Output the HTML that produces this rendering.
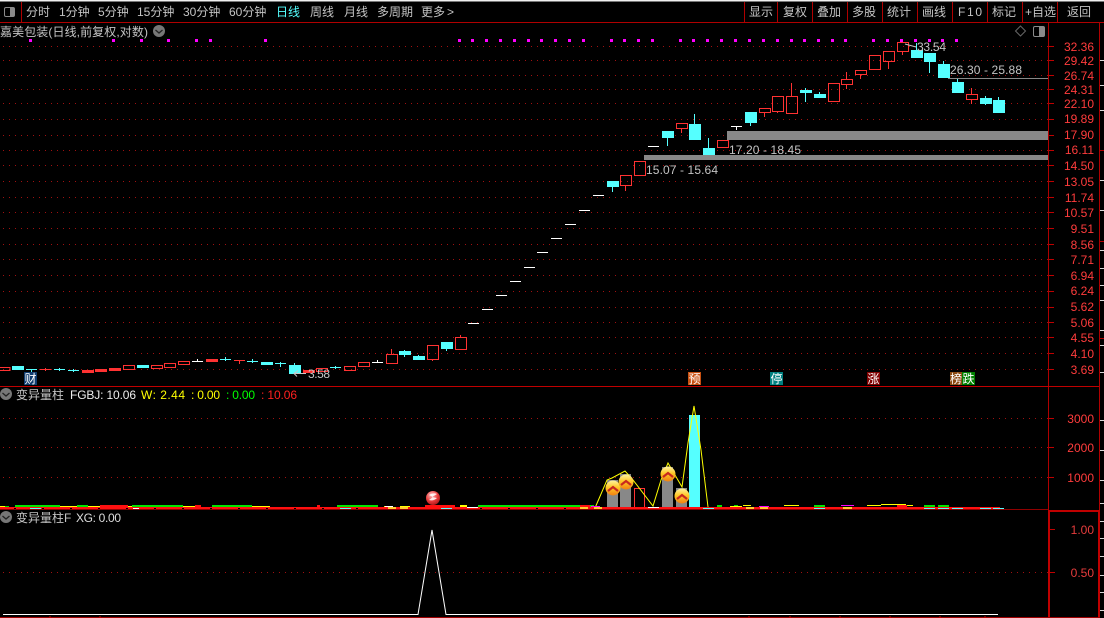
<!DOCTYPE html>
<html><head><meta charset="utf-8"><style>
html,body{margin:0;padding:0;background:#000;width:1104px;height:618px;overflow:hidden}
svg{display:block}
text{font-family:"Liberation Sans","WenQuanYi Zen Hei","Noto Sans CJK SC",sans-serif;font-size:12px;fill:#c4c4c4}
.t text{font-size:12px}
.p text{fill:#ff3c3c;text-anchor:end}
.s text{fill:#fff;text-anchor:middle;font-size:12px}
.c{shape-rendering:crispEdges}
</style></head><body>
<svg width="1104" height="618" viewBox="0 0 1104 618" xmlns="http://www.w3.org/2000/svg">
<defs>
<linearGradient id="g" x1="0" y1="0" x2="0" y2="1"><stop offset="0" stop-color="#fff3a0"/><stop offset=".45" stop-color="#ffc828"/><stop offset="1" stop-color="#f08010"/></linearGradient>
<radialGradient id="b" cx=".4" cy=".3" r=".8"><stop offset="0" stop-color="#ffc0c0"/><stop offset=".55" stop-color="#e83a3a"/><stop offset="1" stop-color="#a01010"/></radialGradient>
</defs>
<rect width="1104" height="618" fill="#000"/>
<rect width="1104" height="1.5" fill="#f0f0f0" class="c"/>
<g class="c" fill="#b00000">
<rect x="0" y="22" width="1104" height="1"/><rect x="21" y="2" width="1" height="20"/>
<rect x="744" y="2" width="1" height="20"/><rect x="777" y="2" width="1" height="20"/><rect x="812" y="2" width="1" height="20"/><rect x="847" y="2" width="1" height="20"/><rect x="882" y="2" width="1" height="20"/><rect x="917" y="2" width="1" height="20"/><rect x="952" y="2" width="1" height="20"/><rect x="987" y="2" width="1" height="20"/><rect x="1022" y="2" width="1" height="20"/><rect x="1057" y="2" width="1" height="20"/>
<rect x="1048" y="23" width="1" height="487"/><rect x="1099" y="23" width="1" height="595"/>
<rect x="0" y="386" width="1099" height="1" fill="#c00000"/><rect x="0" y="509" width="1048" height="1" fill="#900000"/>
<rect x="1099" y="241" width="5" height="1"/><rect x="1099" y="338" width="5" height="1"/><rect x="1099" y="150" width="5" height="1"/>
<rect x="1048" y="510" width="2" height="107" fill="#c00000"/><rect x="1048" y="510" width="52" height="2" fill="#c00000"/><rect x="1098" y="510" width="2" height="107" fill="#c00000"/>
<rect x="0" y="617" width="1100" height="1" fill="#a00000"/>
</g>
<rect x="4.5" y="7.5" width="10" height="9" rx="1.5" fill="none" stroke="#8a8a8a"/><rect x="10" y="8" width="4" height="8" fill="#8a8a8a"/>
<g class="t">
<text x="26" y="16">分时</text><text x="59" y="16">1分钟</text><text x="98" y="16">5分钟</text><text x="137" y="16">15分钟</text><text x="183" y="16">30分钟</text><text x="229" y="16">60分钟</text>
<text x="276" y="16" style="fill:#55ffff">日线</text><text x="310" y="16">周线</text><text x="344" y="16">月线</text><text x="377" y="16">多周期</text><text x="421" y="16">更多</text><text x="447" y="16">&gt;</text>
<text x="749" y="16">显示</text><text x="783" y="16">复权</text><text x="817" y="16">叠加</text><text x="852" y="16">多股</text><text x="887" y="16">统计</text><text x="922" y="16">画线</text><text x="958" y="16" textLength="24">F10</text><text x="992" y="16">标记</text><text x="1025" y="16">+自选</text><text x="1067" y="16">返回</text>
<text x="0" y="36" textLength="148">嘉美包装(日线,前复权,对数)</text>
</g>
<circle cx="159" cy="31" r="6" fill="#777"/><path d="M155.5 30l3.5 3 3.5-3" fill="none" stroke="#222" stroke-width="1.3"/>
<path d="M1020.5 26l5 5-5 5-5-5z" fill="none" stroke="#666"/>
<rect x="1033.5" y="26.5" width="11" height="10" rx="1.5" fill="none" stroke="#8a8a8a"/><rect x="1039" y="27" width="5" height="9" fill="#8a8a8a"/>
<path class="c" fill="#ff00ff" d="M29 39h3v3h-3zM112 39h3v3h-3zM140 39h3v3h-3zM167 39h3v3h-3zM195 39h3v3h-3zM209 39h3v3h-3zM264 39h3v3h-3zM458 39h3v3h-3zM471 39h3v3h-3zM485 39h3v3h-3zM499 39h3v3h-3zM513 39h3v3h-3zM527 39h3v3h-3zM540 39h3v3h-3zM554 39h3v3h-3zM568 39h3v3h-3zM582 39h3v3h-3zM610 39h3v3h-3zM623 39h3v3h-3zM637 39h3v3h-3zM651 39h3v3h-3zM679 39h3v3h-3zM692 39h3v3h-3zM706 39h3v3h-3zM720 39h3v3h-3zM734 39h3v3h-3zM748 39h3v3h-3zM762 39h3v3h-3zM776 39h3v3h-3zM790 39h3v3h-3zM803 39h3v3h-3zM817 39h3v3h-3zM831 39h3v3h-3zM844 39h3v3h-3zM872 39h3v3h-3zM886 39h3v3h-3zM900 39h3v3h-3zM914 39h3v3h-3zM928 39h3v3h-3zM941 39h3v3h-3zM955 39h3v3h-3z"/>
<path class="c" stroke="#a01010" stroke-dasharray="1 5" fill="none" d="M3 46.5H1048M3 60.5H1048M3 75.5H1048M3 89.5H1048M3 103.5H1048M3 119.5H1048M3 135.5H1048M3 150.5H1048M3 165.5H1048M3 181.5H1048M3 197.5H1048M3 212.5H1048M3 228.5H1048M3 244.5H1048M3 259.5H1048M3 275.5H1048M3 291.5H1048M3 307.5H1048M3 322.5H1048M3 337.5H1048M3 353.5H1048M3 369.5H1048M3 418.5H1048M3 447.5H1048M3 477.5H1048M3 572.5H1048"/>
<path class="c" stroke="#c00000" fill="none" d="M1049 46.5h5M1049 60.5h5M1049 75.5h5M1049 89.5h5M1049 103.5h5M1049 119.5h5M1049 135.5h5M1049 150.5h5M1049 165.5h5M1049 181.5h5M1049 197.5h5M1049 212.5h5M1049 228.5h5M1049 244.5h5M1049 259.5h5M1049 275.5h5M1049 291.5h5M1049 307.5h5M1049 322.5h5M1049 337.5h5M1049 353.5h5M1049 369.5h5M1049 418.5h5M1049 447.5h5M1049 477.5h5M1050 529.5h5M1050 572.5h5M50 616v2M100 616v2M749 616v2M790 616v2M840 616v2M890 616v2M940 616v2M985 616v2"/>
<path class="c" stroke="#d8d8d8" fill="none" d="M1100 60.5h4M1100 85.5h4M1100 110.5h4M1100 180.5h4M1100 210.5h4M1100 250.5h4M1100 268.5h4M1100 285.5h4M1100 300.5h4M1100 330.5h4M1100 345.5h4M1100 372.5h4M1100 420.5h4M1100 450.5h4M1100 480.5h4M1100 503.5h4M1100 521.5h4M1100 538.5h4M1100 556.5h4M1100 575.5h4M1100 592.5h4M1100 610.5h4"/>
<g class="p">
<text x="1094" y="51">32.36</text><text x="1094" y="65">29.42</text><text x="1094" y="80">26.74</text><text x="1094" y="94">24.31</text><text x="1094" y="108">22.10</text><text x="1094" y="123">19.89</text><text x="1094" y="139">17.90</text><text x="1094" y="154">16.11</text><text x="1094" y="170">14.50</text><text x="1094" y="186">13.05</text><text x="1094" y="202">11.74</text><text x="1094" y="217">10.57</text><text x="1094" y="233">9.51</text><text x="1094" y="249">8.56</text><text x="1094" y="264">7.71</text><text x="1094" y="280">6.94</text><text x="1094" y="295">6.24</text><text x="1094" y="311">5.62</text><text x="1094" y="327">5.06</text><text x="1094" y="342">4.55</text><text x="1094" y="358">4.10</text><text x="1094" y="374">3.69</text>
<text x="1094" y="423">3000</text><text x="1094" y="452">2000</text><text x="1094" y="482">1000</text>
<text x="1094" y="534" style="fill:#e63c3c">1.00</text><text x="1094" y="577" style="fill:#e63c3c">0.50</text>
</g>
<g class="c" fill="#888">
<rect x="727" y="131" width="321" height="9"/><rect x="644" y="155" width="404" height="5"/><rect x="948" y="78" width="100" height="1"/>
</g>
<path class="c" fill="none" stroke="#ff3232" d="M-1 367.5h11v3h-11zM123.5 365.5h11v4h-11zM151.5 365.5h11v3h-11zM164.5 363.5h11v4h-11zM178.5 361.5h11v3h-11zM316.5 368.5h11v3h-11zM344.5 366.5h11v4h-11zM358.5 362.5h11v4h-11zM386.5 354.5h11v9h-11zM391.5 349v5M427.5 345.5h11v14h-11zM432.5 360v1M455.5 337.5h11v12h-11zM460.5 335v2M620.5 175.5h11v10h-11zM625.5 186v5M634.5 161.5h11v14h-11zM676.5 123.5h11v5h-11zM681.5 129v4M717.5 140.5h11v7h-11zM759.5 108.5h11v4h-11zM764.5 113v4M772.5 96.5h11v15h-11zM777.5 112v1M786.5 96.5h11v17h-11zM791.5 83v13M828.5 83.5h11v18h-11zM841.5 79.5h11v5h-11zM846.5 72v7M846.5 85v4M855.5 70.5h11v4h-11zM860.5 75v4M869.5 55.5h11v14h-11zM883.5 51.5h11v10h-11zM888.5 62v7M897.5 42.5h11v9h-11zM902.5 52v3M966.5 94.5h11v5h-11zM971.5 88v6M971.5 100v4M40 369.5h11M45.5 368v3M234 360.5h11M239.5 361v3"/>
<path class="c" fill="#ff3232" d="M82 370h12v3h-12zM95 369h12v3h-12zM109 368h12v3h-12zM206 359h12v3h-12zM303 370h12v3h-12z"/>
<path class="c" fill="#55ffff" d="M12 366h12v4h-12zM137 365h12v3h-12zM261 362h12v3h-12zM289 365h12v9h-12zM399 351h12v4h-12zM413 356h12v4h-12zM441 342h12v7h-12zM607 181h12v6h-12zM662 131h12v7h-12zM689 124h12v16h-12zM703 148h12v7h-12zM745 112h12v11h-12zM800 90h12v3h-12zM814 94h12v4h-12zM911 50h12v8h-12zM924 53h12v9h-12zM938 64h12v14h-12zM952 82h12v11h-12zM980 98h12v6h-12zM993 100h12v13h-12z"/>
<path class="c" fill="none" stroke="#55ffff" d="M294.5 363v2M404.5 350v7M418.5 355v5M446.5 349v2M612.5 187v5M667.5 138v8M694.5 114v10M708.5 138v10M750.5 123v3M805.5 88v14M819.5 92v6M916.5 43v7M929.5 62v11M943.5 61v3M957.5 79v3M985.5 96v9M998.5 97v16M26 369.5h11M31.5 370v3M54 369.5h11M59.5 368v3M68 370.5h11M73.5 369v3M220 359.5h11M225.5 357v4M247 361.5h11M252.5 359v4M275 363.5h11M280.5 362v5M330 367.5h11M335.5 366v3"/>
<path class="c" fill="none" stroke="#fff" d="M192 361.5h11M197.5 359v2M372 362.5h11M377.5 360v2M468 323.5h11M482 309.5h11M496 295.5h11M510 281.5h11M524 267.5h11M537 252.5h11M551 238.5h11M565 224.5h11M579 210.5h11M593 195.5h11M648 146.5h11M731 126.5h11M736.5 127v3"/>
<text x="917" y="51" textLength="29">33.54</text>
<path d="M905 44l11 3" stroke="#c4c4c4" fill="none"/>
<text x="950" y="74" textLength="72">26.30 - 25.88</text>
<text x="729" y="154" textLength="72">17.20 - 18.45</text>
<text x="646" y="174" textLength="72">15.07 - 15.64</text>
<path class="c" d="M294 373.5h12" stroke="#c8c8c8" fill="none"/><path d="M298 370.5l-4 3 3 3" stroke="#c8c8c8" fill="none"/>
<text x="308" y="378" textLength="22">3.58</text>
<g class="c"><rect x="24" y="372" width="13" height="13" fill="#103d70"/><rect x="688" y="372" width="13" height="13" fill="#c85010"/><rect x="770" y="372" width="13" height="13" fill="#008080"/><rect x="867" y="372" width="13" height="13" fill="#800000"/><rect x="950" y="372" width="13" height="13" fill="#8b4a10"/><rect x="962" y="372" width="13" height="13" fill="#008000"/></g>
<g class="s"><text x="30.5" y="383">财</text><text x="694.5" y="383">预</text><text x="776.5" y="383">停</text><text x="873.5" y="383">涨</text><text x="956" y="383">榜</text><text x="968.5" y="383">跌</text></g>
<circle cx="6" cy="394" r="6" fill="#777"/><path d="M2.5 393l3.5 3 3.5-3" fill="none" stroke="#222" stroke-width="1.3"/>
<text x="16" y="399">变异量柱</text>
<text x="70" y="399" style="fill:#eee" textLength="66">FGBJ: 10.06</text>
<text x="141" y="399" style="fill:#ffff00" textLength="44">W: 2.44</text>
<text x="191" y="399" style="fill:#ffff00" textLength="29">: 0.00</text>
<text x="226" y="399" style="fill:#00ff00" textLength="29">: 0.00</text>
<text x="261" y="399" style="fill:#ff2020" textLength="36">: 10.06</text>
<g class="c">
<rect x="607" y="480" width="11" height="28" fill="#888"/><rect x="620" y="474" width="11" height="34" fill="#888"/><rect x="662" y="467" width="11" height="41" fill="#888"/><rect x="676" y="488" width="11" height="19" fill="#888"/><rect x="689" y="415" width="11" height="92" fill="#55ffff"/>
<rect x="634.5" y="488.5" width="10" height="19" fill="none" stroke="#ff3232"/>
</g>
<polyline fill="none" stroke="#ffff00" points="595,508 607,480 612,478 625,471 633,480 653,506 661,480 668,463 682,487 688,443 694,406 701,450 708,507"/>
<path class="c" fill="#00e600" d="M5 506h4v1h-4zM15 505h45v2h-45zM77 505h11v2h-11zM132 505h51v2h-51zM212 505h40v2h-40zM337 505h41v2h-41zM478 505h102v2h-102zM590 505h4v2h-4zM717 505h5v2h-5zM734 505h4v2h-4zM814 505h11v2h-11zM924 505h11v2h-11zM938 505h11v2h-11z"/>
<path class="c" fill="#ffff00" d="M0 506h5v1h-5zM60 506h17v1h-17zM88 506h12v1h-12zM128 506h4v1h-4zM183 506h12v1h-12zM252 506h18v1h-18zM384 506h8v1h-8zM400 506h10v1h-10zM460 505h7v2h-7zM784 505h15v1h-15zM867 505h14v1h-14zM881 504h25v1h-25zM906 505h7v1h-7zM730 506h12v1h-12zM743 505h8v1h-8z"/>
<path class="c" fill="#ff1010" d="M0 507h1000v2h-1000zM100 505h28v2h-28zM195 505h6v2h-6zM317 505h3v2h-3zM425 505h30v2h-30zM580 505h10v2h-10zM897 505h10v2h-10z"/>
<path class="c" fill="#ff00ff" d="M591 506h9v1h-9zM759 506h10v1h-10zM841 505h13v1h-13z"/>
<path class="c" fill="#55ffff" d="M30 508h11v1h-11zM340 508h11v1h-11zM441 508h11v1h-11zM703 508h11v1h-11zM814 508h11v1h-11zM924 508h11v1h-11zM938 508h11v1h-11zM952 508h11v1h-11zM980 508h11v1h-11zM993 508h11v1h-11z"/>
<path class="c" fill="#fff" d="M133 508h6v1h-6zM467 507h11v1h-11zM648 507h11v1h-11zM385 506h8v1h-8z"/>
<path class="c" fill="#ffcc30" d="M594 507h8v2h-8zM746 507h8v2h-8zM760 507h8v2h-8zM843 507h9v2h-9zM388 507h8v2h-8zM400 507h8v2h-8zM580 507h8v2h-8z"/>
<path class="c" fill="#000" d="M14 508h2v1h-2zM42 508h2v1h-2zM70 508h2v1h-2zM98 508h2v1h-2zM126 508h2v1h-2zM154 508h2v1h-2zM182 508h2v1h-2zM210 508h2v1h-2zM238 508h2v1h-2zM266 508h2v1h-2zM294 508h2v1h-2zM322 508h2v1h-2zM356 508h2v1h-2zM480 508h2v1h-2zM508 508h2v1h-2zM536 508h2v1h-2zM564 508h2v1h-2z"/>
<g>
<circle cx="613" cy="488" r="7.5" fill="url(#g)"/><path d="M608 491l5-4 5 4" fill="none" stroke="#c8281e" stroke-width="2.2"/>
<circle cx="626" cy="482" r="7.5" fill="url(#g)"/><path d="M621 485l5-4 5 4" fill="none" stroke="#c8281e" stroke-width="2.2"/>
<circle cx="668" cy="474" r="7.5" fill="url(#g)"/><path d="M663 477l5-4 5 4" fill="none" stroke="#c8281e" stroke-width="2.2"/>
<circle cx="682" cy="496" r="7.5" fill="url(#g)"/><path d="M677 499l5-4 5 4" fill="none" stroke="#c8281e" stroke-width="2.2"/>
</g>
<circle cx="433" cy="498" r="7" fill="url(#b)"/><path d="M429 495c3-2 6-2 8-1l-5 3 5 1c-2 2-5 3-8 2l4-3z" fill="#fff" opacity=".85"/>
<circle cx="6" cy="517" r="6" fill="#777"/><path d="M2.5 516l3.5 3 3.5-3" fill="none" stroke="#222" stroke-width="1.3"/>
<text x="16" y="522">变异量柱F</text>
<text x="76" y="522" style="fill:#ddd" textLength="45">XG: 0.00</text>
<polyline fill="none" stroke="#fff" points="3,614.5 418,614.5 432,530 446,614.5 998,614.5"/>
</svg>
</body></html>
